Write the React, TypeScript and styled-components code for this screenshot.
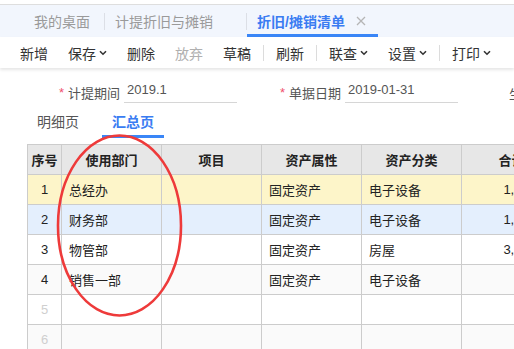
import React from "react";
import styled, { createGlobalStyle, css } from "styled-components";

const GlobalStyle = createGlobalStyle`
  html, body {
    margin: 0;
    padding: 0;
    background: #fff;
    overflow: hidden;
  }
  body {
    font-family: "Liberation Sans", "Noto Sans CJK SC", sans-serif;
  }
`;

const Page = styled.div`
  width: 514px;
  height: 349px;
  overflow: hidden;
  padding-top: 4px;
  box-sizing: border-box;
  position: relative;
`;

const TabBar = styled.div`
  height: 32px;
  border-top: 1px solid #dedede;
  background: #f2f6fd;
  display: flex;
  align-items: stretch;
  padding-left: 24px;
`;

const Tab = styled.div<{ $active?: boolean; $home?: boolean }>`
  position: relative;
  display: flex;
  align-items: center;
  padding: 0 12px 0 11px;
  font-size: 14px;
  color: #9a9a9a;
  box-sizing: border-box;
  ${(p) =>
    p.$home &&
    css`
      padding: 0 14px 0 10px;
    `}
  ${(p) =>
    !p.$home &&
    css`
      &::before {
        content: "";
        position: absolute;
        left: 0;
        top: 8px;
        width: 1px;
        height: 17px;
        background: #dcdfe6;
      }
    `}
  ${(p) =>
    p.$active &&
    css`
      color: #3a7cf2;
      font-weight: bold;
      &::after {
        content: "";
        position: absolute;
        left: 1px;
        right: 0;
        bottom: 0;
        height: 3px;
        background: #3a86f7;
      }
    `}
`;

const Close = styled.span<{ $show?: boolean }>`
  margin-left: 11px;
  width: 10px;
  height: 10px;
  display: inline-flex;
  visibility: ${(p) => (p.$show ? "visible" : "hidden")};
`;

const Toolbar = styled.div`
  height: 31px;
  background: #fff;
  display: flex;
  align-items: center;
  padding-left: 10px;
  box-shadow: 0 2px 3px rgba(0, 0, 0, 0.1);
  position: relative;
`;

const ToolButton = styled.div<{ $disabled?: boolean }>`
  display: flex;
  align-items: center;
  padding: 0 10px;
  font-size: 14px;
  color: ${(p) => (p.$disabled ? "#b0b0b0" : "#333")};
  svg {
    margin-left: 3px;
  }
`;

const ToolSep = styled.div`
  width: 1px;
  height: 16px;
  background: #dcdcdc;
  margin: 0 2px;
`;

const FormRow = styled.div`
  display: flex;
  align-items: flex-end;
  padding: 13px 0 0 59px;
  height: 22px;
`;

const FormItem = styled.div<{ $offset?: number }>`
  display: flex;
  align-items: center;
  margin-right: 43px;
  margin-left: ${(p) => p.$offset ?? 0}px;
  white-space: nowrap;
`;

const Star = styled.span`
  color: #f0506e;
  font-size: 13px;
  margin-right: 2px;
  width: 7px;
`;

const Label = styled.span`
  font-size: 13px;
  color: #555;
`;

const Field = styled.div`
  margin-left: 4px;
  width: 113px;
  padding: 0 0 3px 3px;
  box-sizing: border-box;
  border-bottom: 1px solid #d6d6d6;
  font-size: 13px;
  color: #555;
  line-height: 18px;
`;

const SubTabs = styled.div`
  display: flex;
  padding: 9px 0 0 27px;
  height: 27px;
`;

const SubTab = styled.div<{ $active?: boolean }>`
  padding: 0 10px;
  margin-right: 13px;
  font-size: 14px;
  line-height: 20px;
  height: 23px;
  color: ${(p) => (p.$active ? "#3a7cf2" : "#555")};
  font-weight: ${(p) => (p.$active ? "bold" : "normal")};
  border-bottom: 3px solid ${(p) => (p.$active ? "#3a86f7" : "transparent")};
`;

const TableWrap = styled.div`
  padding: 5px 0 0 27px;
  position: relative;
`;

const Table = styled.table`
  border-collapse: collapse;
  table-layout: fixed;
  width: 600px;
  font-size: 13px;
  td,
  th {
    border: 1px solid #cccccc;
    height: 30px;
    padding: 0 7px;
    box-sizing: border-box;
    white-space: nowrap;
    overflow: hidden;
  }
  th {
    background: #e7e7e7;
    font-weight: bold;
    color: #222;
    text-align: center;
  }
`;

const Row = styled.tr<{ $bg: string }>`
  background: ${(p) => p.$bg};
  color: #222;
`;

const NumCell = styled.td<{ $empty?: boolean }>`
  text-align: center;
  color: ${(p) => (p.$empty ? "#cfcfcf" : "#222")};
`;

const AmountCell = styled.td`
  text-align: right;
`;

const Annotation = styled.svg`
  position: absolute;
  left: 0;
  top: 0;
  pointer-events: none;
`;

const Chevron = () => (
  <svg width="8" height="6" viewBox="0 0 8 6">
    <path d="M1 1.2 L4 4.2 L7 1.2" fill="none" stroke="#333" strokeWidth="1.6" />
  </svg>
);

const CloseIcon = () => (
  <svg width="10" height="10" viewBox="0 0 10 10">
    <path d="M1 1 L9 9 M9 1 L1 9" stroke="#b5b5b5" strokeWidth="1.3" />
  </svg>
);

const rows = [
  { no: 1, dept: "总经办", attr: "固定资产", cat: "电子设备", amount: "1,500.00", bg: "#fdf5c9" },
  { no: 2, dept: "财务部", attr: "固定资产", cat: "电子设备", amount: "1,200.00", bg: "#e4effd" },
  { no: 3, dept: "物管部", attr: "固定资产", cat: "房屋", amount: "3,600.00", bg: "#ffffff" },
  { no: 4, dept: "销售一部", attr: "固定资产", cat: "电子设备", amount: "", bg: "#fafafa" },
  { no: 5, dept: "", attr: "", cat: "", amount: "", bg: "#ffffff" },
  { no: 6, dept: "", attr: "", cat: "", amount: "", bg: "#fafafa" },
];

const tools: { label: string; menu?: boolean; disabled?: boolean; sepAfter?: boolean }[] = [
  { label: "新增" },
  { label: "保存", menu: true },
  { label: "删除" },
  { label: "放弃", disabled: true },
  { label: "草稿", sepAfter: true },
  { label: "刷新", sepAfter: true },
  { label: "联查", menu: true },
  { label: "设置", menu: true, sepAfter: true },
  { label: "打印", menu: true },
];

export default function App() {
  return (
    <Page>
      <GlobalStyle />
      <TabBar>
        <Tab $home>我的桌面</Tab>
        <Tab>
          计提折旧与摊销
          <Close />
        </Tab>
        <Tab $active>
          折旧/摊销清单
          <Close $show>
            <CloseIcon />
          </Close>
        </Tab>
      </TabBar>
      <Toolbar>
        {tools.map((t) => (
          <React.Fragment key={t.label}>
            <ToolButton $disabled={t.disabled}>
              {t.label}
              {t.menu && <Chevron />}
            </ToolButton>
            {t.sepAfter && <ToolSep />}
          </React.Fragment>
        ))}
      </Toolbar>
      <FormRow>
        <FormItem>
          <Star>*</Star>
          <Label>计提期间</Label>
          <Field>2019.1</Field>
        </FormItem>
        <FormItem>
          <Star>*</Star>
          <Label>单据日期</Label>
          <Field>2019-01-31</Field>
        </FormItem>
        <FormItem $offset={8}>
          <Label>生成方式</Label>
        </FormItem>
      </FormRow>
      <SubTabs>
        <SubTab>明细页</SubTab>
        <SubTab $active>汇总页</SubTab>
      </SubTabs>
      <TableWrap>
        <Table>
          <colgroup>
            <col style={{ width: 34 }} />
            <col style={{ width: 100 }} />
            <col style={{ width: 100 }} />
            <col style={{ width: 100 }} />
            <col style={{ width: 100 }} />
            <col style={{ width: 100 }} />
            <col style={{ width: 66 }} />
          </colgroup>
          <thead>
            <tr>
              <th style={{ padding: 0 }}>序号</th>
              <th>使用部门</th>
              <th>项目</th>
              <th>资产属性</th>
              <th>资产分类</th>
              <th>合计</th>
              <th>本月</th>
            </tr>
          </thead>
          <tbody>
            {rows.map((r) => (
              <Row key={r.no} $bg={r.bg}>
                <NumCell $empty={!r.dept}>{r.no}</NumCell>
                <td>{r.dept}</td>
                <td />
                <td>{r.attr}</td>
                <td>{r.cat}</td>
                <AmountCell>{r.amount}</AmountCell>
                <td />
              </Row>
            ))}
          </tbody>
        </Table>
      </TableWrap>
      <Annotation width="514" height="349" viewBox="0 0 514 349">
        <ellipse cx="119.5" cy="225.5" rx="61.5" ry="90" fill="none" stroke="#ee3a3a" strokeWidth="2.6" />
      </Annotation>
    </Page>
  );
}
